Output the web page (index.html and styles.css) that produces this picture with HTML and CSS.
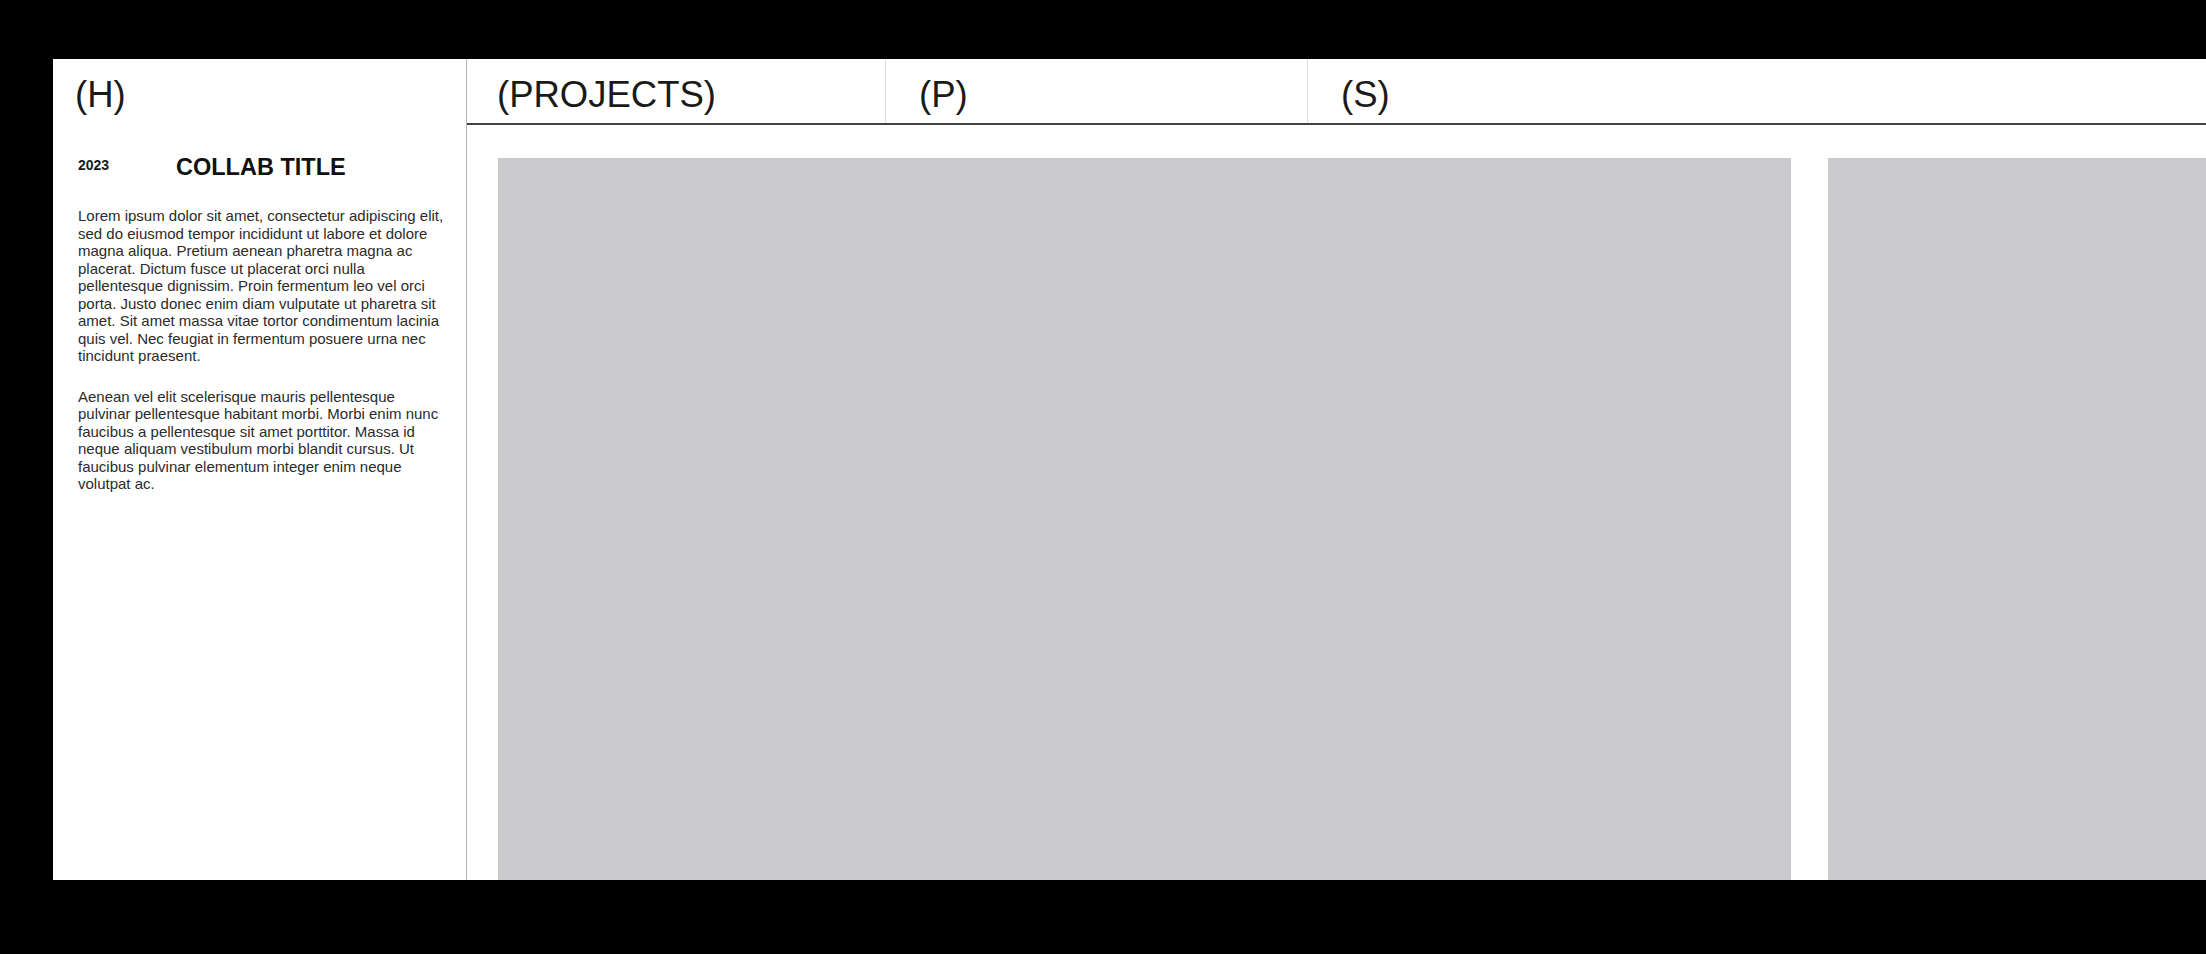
FILE: index.html
```html
<!DOCTYPE html>
<html lang="en">
<head>
    <meta charset="UTF-8">
    <meta name="viewport" content="width=device-width, initial-scale=1.0">
    <title>Projects</title>
    <link rel="stylesheet" href="styles.css">
</head>
<body>

    <div class="frame">
        <!-- left column -->
        <aside class="sidebar">
            <div class="sidebar-head">(H)</div>
            <div class="collab">
                <div class="collab-head">
                    <span class="year">2023</span>
                    <h2 class="collab-title">COLLAB TITLE</h2>
                </div>
                <p>Lorem ipsum dolor sit amet, consectetur adipiscing elit, sed do eiusmod tempor incididunt ut labore et dolore magna aliqua. Pretium aenean pharetra magna ac placerat. Dictum fusce ut placerat orci nulla pellentesque dignissim. Proin fermentum leo vel orci porta. Justo donec enim diam vulputate ut pharetra sit amet. Sit amet massa vitae tortor condimentum lacinia quis vel. Nec feugiat in fermentum posuere urna nec tincidunt praesent.</p>
                <p>Aenean vel elit scelerisque mauris pellentesque pulvinar pellentesque habitant morbi. Morbi enim nunc faucibus a pellentesque sit amet porttitor. Massa id neque aliquam vestibulum morbi blandit cursus. Ut faucibus pulvinar elementum integer enim neque volutpat ac.</p>
            </div>
        </aside>

        <!-- projects -->
        <main class="projects">
            <nav class="tabs">
                <div class="tab tab-first">(PROJECTS)</div>
                <div class="tab">(P)</div>
                <div class="tab tab-last">(S)</div>
            </nav>
            <div class="gallery">
                <div class="tile"></div>
                <div class="tile"></div>
            </div>
        </main>
    </div>

</body>
</html>
```

FILE: styles.css
```css
/* page */
body {
    margin: 0;
    background: #000;
    font-family: "Liberation Sans", Arial, sans-serif;
    color: #222;
    overflow: hidden;
}

/* white sheet */
.frame {
    display: flex;
    margin: 59px 0 0 53px;
    height: 821px;
    background: #fff;
    overflow: hidden;
}

/* left column */
.sidebar {
    width: 413px;
    flex-shrink: 0;
    border-right: 1px solid #b4b4b4;
}

.sidebar-head {
    height: 66px;
    box-sizing: border-box;
    padding: 18px 0 0 22px;
    font-size: 36.5px;
    line-height: 36px;
    color: #1a1a1a;
}

.collab {
    padding: 29px 18px 0 25px;
}

.collab-head {
    display: flex;
    align-items: flex-start;
    margin-bottom: 26px;
}

.year {
    width: 98px;
    margin-top: 3px;
    font-size: 14px;
    font-weight: bold;
    color: #1a1a1a;
}

.collab-title {
    margin: 0;
    font-size: 23.5px;
    font-weight: bold;
    line-height: 1.15;
    color: #111;
}

.collab p {
    margin: 0 0 23px;
    font-size: 15px;
    line-height: 17.5px;
    color: #2b2b2b;
}

/* projects */
.projects {
    flex: 1;
    min-width: 0;
    display: flex;
    flex-direction: column;
}

.tabs {
    display: flex;
    height: 66px;
    flex-shrink: 0;
    box-sizing: border-box;
    border-bottom: 2px solid #444;
}

.tab {
    width: 422px;
    box-sizing: border-box;
    padding: 18px 0 0 33px;
    border-right: 1px solid #ddd;
    font-size: 36.5px;
    line-height: 36px;
    color: #1a1a1a;
}

.tab-first {
    width: 419px;
    padding-left: 30px;
}

.tab-last {
    flex: 1;
    border-right: none;
}

.gallery {
    flex: 1;
    display: flex;
    gap: 37px;
    padding: 33px 0 0 31px;
}

.tile {
    width: 1293px;
    flex-shrink: 0;
    background: #cacacc;
}
```
